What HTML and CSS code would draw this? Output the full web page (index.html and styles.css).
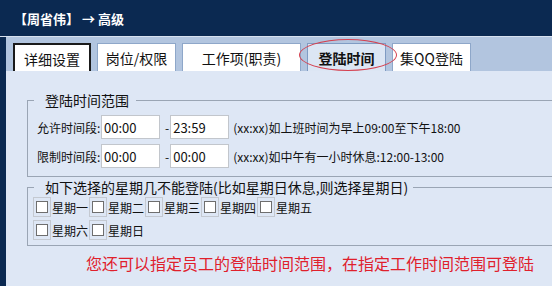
FILE: index.html
```html
<!DOCTYPE html>
<html>
<head>
<meta charset="utf-8">
<link rel="stylesheet" href="styles.css">
</head>
<body>
<div class="header">【周省伟】 → 高级</div>
<div class="main">
  <div class="tabbar">
    <div class="tab tab-focus">详细设置</div>
    <div class="tab">岗位/权限</div>
    <div class="tab tab-wide">工作项(职责)</div>
    <div class="tab tab-active">登陆时间</div>
    <div class="tab">集QQ登陆</div>
    <div class="mark"></div>
  </div>
  <div class="content">
    <fieldset class="box box-time">
      <legend>登陆时间范围</legend>
      <div class="row">
        <span class="lbl">允许时间段:</span><input class="tin" value="00:00"><span class="dash">-</span><input class="tin" value="23:59"><span class="note">(xx:xx)如上班时间为早上09:00至下午18:00</span>
      </div>
      <div class="row">
        <span class="lbl">限制时间段:</span><input class="tin" value="00:00"><span class="dash">-</span><input class="tin" value="00:00"><span class="note">(xx:xx)如中午有一小时休息:12:00-13:00</span>
      </div>
    </fieldset>
    <fieldset class="box box-week">
      <legend class="legend-week">如下选择的星期几不能登陆(比如星期日休息,则选择星期日)</legend>
      <div class="days">
        <label class="day"><span class="cell"><input type="checkbox" class="chk"></span><span class="dname">星期一</span></label>
        <label class="day"><span class="cell"><input type="checkbox" class="chk"></span><span class="dname">星期二</span></label>
        <label class="day"><span class="cell"><input type="checkbox" class="chk"></span><span class="dname">星期三</span></label>
        <label class="day"><span class="cell"><input type="checkbox" class="chk"></span><span class="dname">星期四</span></label>
        <label class="day"><span class="cell"><input type="checkbox" class="chk"></span><span class="dname">星期五</span></label>
        <label class="day"><span class="cell"><input type="checkbox" class="chk"></span><span class="dname">星期六</span></label>
        <label class="day"><span class="cell"><input type="checkbox" class="chk"></span><span class="dname">星期日</span></label>
      </div>
    </fieldset>
    <div class="tip">您还可以指定员工的登陆时间范围，在指定工作时间范围可登陆</div>
  </div>
</div>
</body>
</html>
```
FILE: styles.css
```css
html, body {
  margin: 0;
  padding: 0;
  height: 286px;
  overflow: hidden;
}
body {
  background: #0b2951;
  font-family: "Noto Sans CJK SC", "Noto Sans", sans-serif;
  color: #111;
}
.header {
  height: 36px;
  line-height: 38px;
  padding-left: 14px;
  color: #fff;
  font-weight: bold;
  font-size: 13px;
  border-bottom: 1px solid #d7e1ef;
}
.main {
  margin-left: 6px;
  height: 249px;
  background: #dee7f5;
}
.tabbar {
  position: relative;
  height: 34px;
  background: #b2c5df;
  display: flex;
  align-items: flex-end;
  gap: 6px;
  padding-left: 7px;
}
.tab {
  box-sizing: border-box;
  width: 79px;
  height: 28px;
  background: #fff;
  border: 1px solid #8ea7c9;
  border-bottom: none;
  font-size: 14px;
  line-height: 29px;
  text-align: center;
  color: #111;
}
.tab-focus {
  width: 78px;
  border: 2px solid #1a1a1a;
  border-bottom: none;
  line-height: 28px;
}
.tab-wide {
  width: 119px;
}
.tab-active {
  background: #dce6f4;
  border-color: #7f9bc3;
  font-weight: bold;
}
.mark {
  position: absolute;
  left: 293px;
  top: 2px;
  width: 96px;
  height: 30px;
  border: 1.5px solid #d5404f;
  border-radius: 50%;
}
.content {
  padding: 20px 0 0 21px;
}
.box {
  box-sizing: border-box;
  width: 560px;
  margin: 0;
  padding: 0 0 8px 9px;
  border: 1px solid #9aa5b4;
}
.box legend {
  font-size: 14px;
  line-height: 18px;
  padding: 0 7px 0 11px;
  margin-left: -3px;
  color: #111;
}
.box-time .row {
  display: flex;
  align-items: center;
  height: 24px;
  margin-top: 5px;
}
.box-time .row:first-of-type {
  margin-top: 6px;
}
.lbl {
  font-size: 12px;
  width: 64px;
  white-space: nowrap;
}
.tin {
  box-sizing: border-box;
  width: 59px;
  height: 24px;
  margin: 0;
  padding: 0 0 0 2px;
  border: 1px solid #c2c6cc;
  background: #fff;
  font-family: "Noto Sans CJK SC", "Noto Sans", sans-serif;
  font-size: 13px;
  color: #111;
  outline: none;
}
.dash {
  font-size: 12px;
  margin: 0 1px 0 5px;
}
.note {
  font-size: 12px;
  margin-left: 4px;
  white-space: nowrap;
}
.box-week {
  margin-top: 1px;
  padding: 1px 0 5px 5px;
}
.box-week .legend-week {
  padding-right: 5px;
  margin-left: 1px;
}
.days {
  display: grid;
  grid-template-columns: repeat(5, 56px);
  row-gap: 3px;
}
.day {
  display: flex;
  align-items: center;
  height: 20px;
}
.cell {
  box-sizing: border-box;
  width: 18px;
  height: 20px;
  border: 1px solid #c4c9d1;
  display: flex;
  align-items: center;
  justify-content: center;
}
.chk {
  appearance: none;
  -webkit-appearance: none;
  box-sizing: border-box;
  width: 12px;
  height: 12px;
  margin: 0;
  border: 1px solid #6e6e6e;
  background: #fff;
}
.dname {
  font-size: 12px;
  margin-left: 1px;
  white-space: nowrap;
}
.tip {
  margin: 7px 0 0 59px;
  font-size: 16px;
  line-height: 20px;
  letter-spacing: 0;
  color: #e0202c;
}
```
